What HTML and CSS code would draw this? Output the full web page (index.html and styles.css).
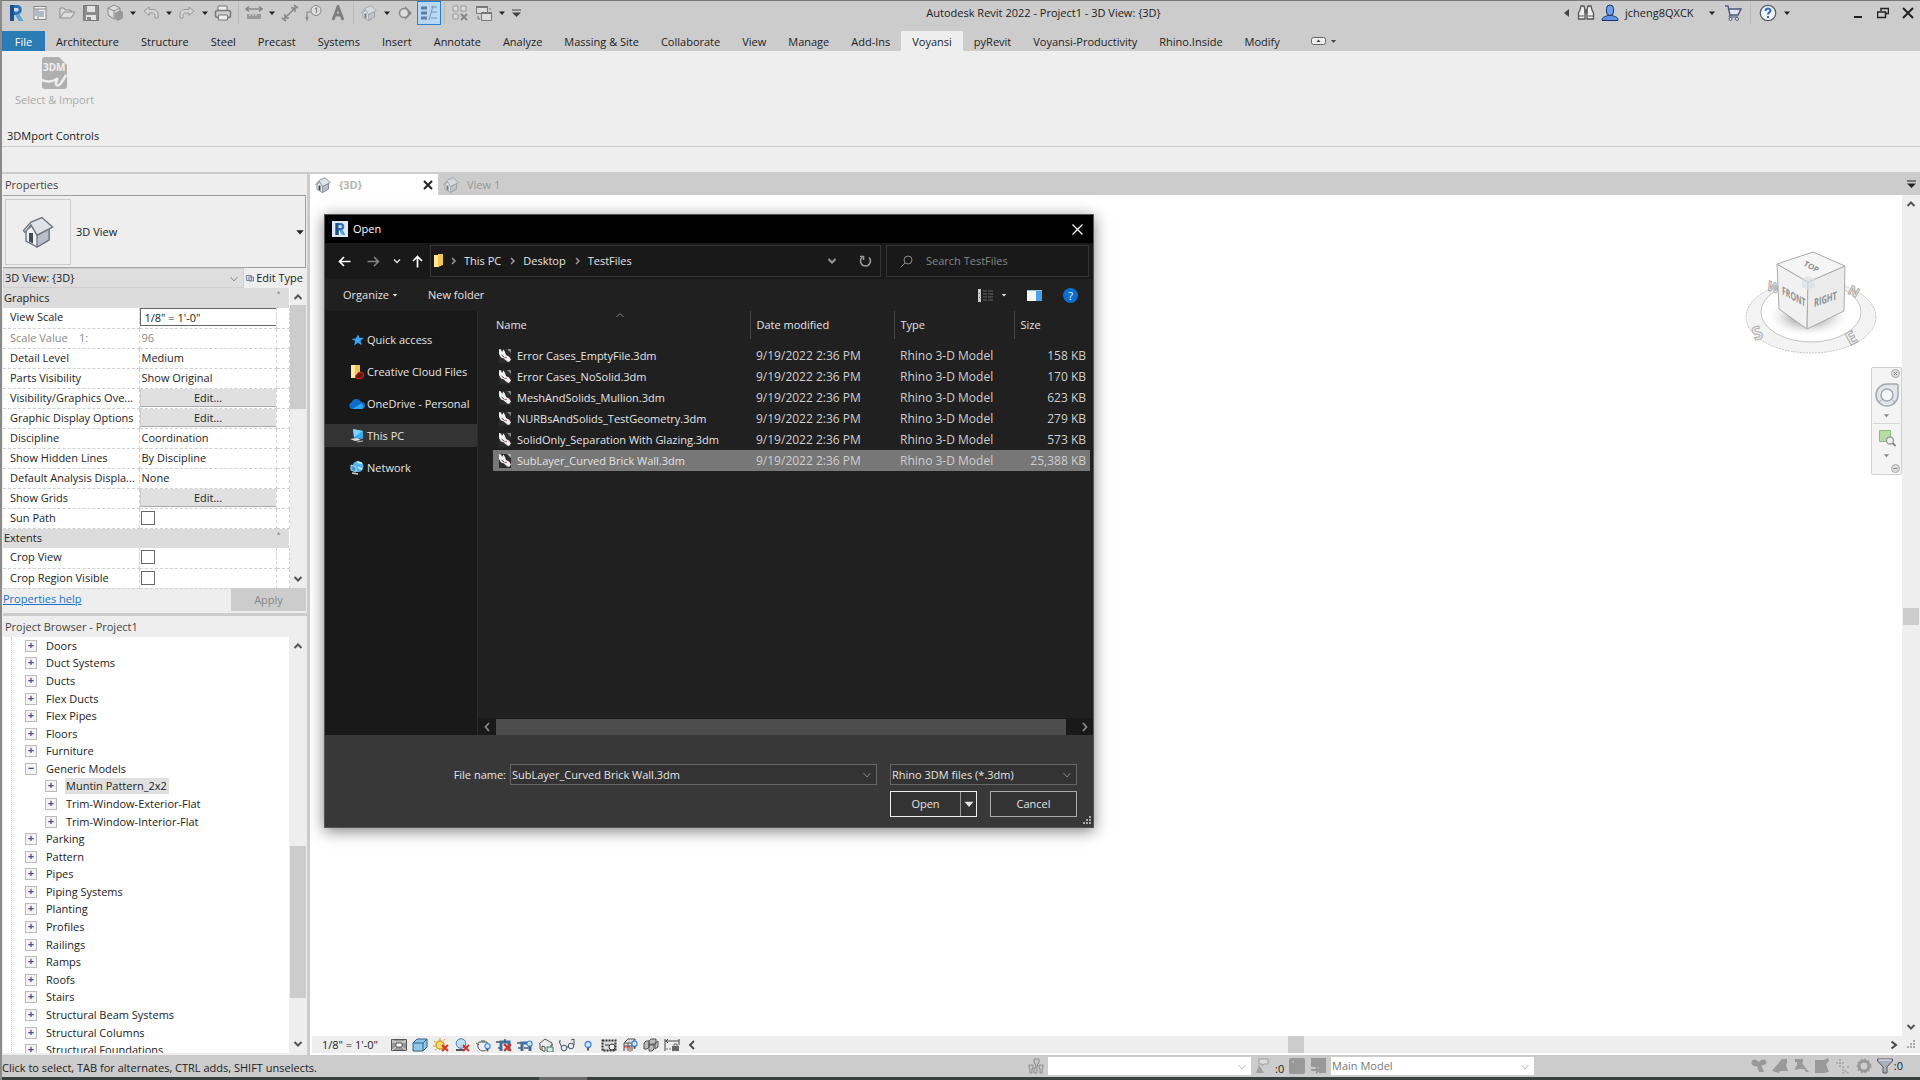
FILE: index.html
```
<!DOCTYPE html>
<html lang="en">
<head>
    <meta charset="UTF-8">
    <meta name="viewport" content="width=device-width, initial-scale=1.0">
    <title>Autodesk Revit 2022 - Project1 - 3D View: {3D}</title>
    <link rel="stylesheet" href="styles.css">
</head>
<body>
    <!-- shared icons -->
    <svg class="defs" aria-hidden="true">
        <symbol id="i-house" viewBox="0 0 16 16">
            <path d="M2 7 L2 12.500 L7.500 15.500 L13.500 12 L13.500 6.500 L8 3Z" fill="#eceef1" stroke="#6c747e" stroke-width=".7"/>
            <path d="M7.500 9.500 L13.500 6.500 V12 L7.500 15.500Z" fill="#b9bfc8" stroke="#6c747e" stroke-width=".6"/>
            <path d="M.7 7.300 L4.500 3 L10 .8 L15.300 5.500 L7.500 9.600 L4.500 4.500 L1.500 8.200Z" fill="#dfe3e8" stroke="#6c747e" stroke-width=".7"/>
            <path d="M3.500 8.500 h2 v5.200 l-2 -1z" fill="#444b55"/>
        </symbol>
        <symbol id="i-down" viewBox="0 0 8 8"><path d="M1 2.500h6L4 6z" fill="currentColor"/></symbol>
        <symbol id="i-chev" viewBox="0 0 10 10"><path d="M1.500 3l3.500 4 3.500-4" fill="none" stroke="currentColor"/></symbol>
        <symbol id="i-bold-chev" viewBox="0 0 10 10"><path d="M1.500 3l3.500 3.500L8.500 3" fill="none" stroke="currentColor" stroke-width="2"/></symbol>
        <symbol id="i-rhino" viewBox="0 0 14 16">
            <path d="M1 1h8l4 4v10H1z" fill="#2b2b2b"/>
            <path d="M9 1l4 4V1z" fill="#e8e8e8" opacity=".5"/>
            <path d="M1 1l2 .5 1 2.500 1.500-2.500L7 4l1 3 3 1.500 2 3-2 2.500-3-1-2-2.500-3-1L1 6z" fill="#f1f1f1"/>
            <path d="M3.500 7l3 2.500M7 12l2 1.500" stroke="#444"/>
            <circle cx="8" cy="9.500" r=".8" fill="#b43b3b"/>
        </symbol>
        <symbol id="i-r" viewBox="0 0 16 18">
            <path d="M2 1h7c6 0 6 8 2 9l4 7h-4L7.500 11H6v6H2z" fill="#2b73b8"/>
            <path d="M2 1h4v16H2z" fill="#1c4f8c"/>
            <path d="M6 4h3c2.200 0 2.200 3.500 0 3.500H6z" fill="#cfdcea"/>
            <path d="M11 10l4 7h-4L7.500 11z" fill="#59a7dd"/>
        </symbol>
        <symbol id="i-redx" viewBox="0 0 8 8"><path d="M1 1l6 6M7 1L1 7" stroke="#d0352b" stroke-width="2"/></symbol>
        <symbol id="i-bulb" viewBox="0 0 8 10"><circle cx="4" cy="4" r="3" fill="#cfe6ff" stroke="#3f86dc" stroke-width="1.300"/><path d="M3 7h2v3H3z" fill="#556"/></symbol>
    </svg>

    <header class="titlebar">
        <div class="quick">
            <button class="qbtn" aria-label="Revit"><svg width="16" height="20"><use href="#i-r"/></svg></button>
            <button class="qbtn" aria-label="Home"><svg width="16" height="16" viewBox="0 0 16 16"><rect x="2" y="1.500" width="12" height="13" fill="#eee" stroke="#888"/><path d="M2 4h12M6 4v10" stroke="#888"/><path d="M3 6h2M3 8h2M3 10h2M7 7h5M7 9h5M7 11h5" stroke="#6787a8"/></svg></button>
            <button class="qbtn open" aria-label="Open"><svg width="18" height="16" viewBox="0 0 18 16"><path d="M2 13V3h4l1 2h6v2M2 13L6 7h11l-4 6z" fill="#ddd" stroke="#8d8d8d"/></svg></button>
            <button class="qbtn" aria-label="Save"><svg width="18" height="18" viewBox="0 0 18 18"><path d="M1.500 1.500h15v15h-15z" fill="#8c8c8c" stroke="#777"/><path d="M5 2h8v6H5zM4 11h10v5H4z" fill="#e2e2e2"/><path d="M5 13h4v3H5z" fill="#888"/></svg></button>
            <button class="qbtn" aria-label="Sync"><svg width="18" height="18" viewBox="0 0 18 18"><path d="M8 1l6 3v7l-6 4-6-4V4z" fill="#ddd" stroke="#888"/><path d="M2 4l6 3 6-3M8 7v8" stroke="#888" fill="none"/><path d="M9 9l5-3 3 2v6l-5 3-3-2z" fill="#999"/></svg></button>
            <button class="drop" aria-label="Sync options"><svg width="8" height="8"><use href="#i-down"/></svg></button>
            <button class="qbtn" aria-label="Undo"><svg width="16" height="16" viewBox="0 0 16 16"><path d="M1 6l5-4v2.500h4c4 0 5 3 5 5.500v3h-3v-2c0-2-1-3-3-3H6V10.500z" fill="#d5d5d5" stroke="#999"/></svg></button>
            <button class="drop" aria-label="Undo list"><svg width="8" height="8"><use href="#i-down"/></svg></button>
            <button class="qbtn" aria-label="Redo"><svg width="16" height="16" viewBox="0 0 16 16"><path d="M15 6l-5-4v2.500H6c-4 0-5 3-5 5.500v3h3v-2c0-2 1-3 3-3h3v2.500z" fill="#d5d5d5" stroke="#999"/></svg></button>
            <button class="drop" aria-label="Redo list"><svg width="8" height="8"><use href="#i-down"/></svg></button>
            <button class="qbtn" aria-label="Print"><svg width="18" height="18" viewBox="0 0 18 18"><path d="M4 6V2h9v4" fill="#eee" stroke="#777"/><rect x="1.500" y="6.500" width="15" height="7" rx="2" fill="#ccc" stroke="#777" stroke-width="1.500"/><path d="M4.500 11h9v5h-9z" fill="#eee" stroke="#777"/></svg></button>
            <span class="vsep"></span>
            <button class="qbtn" aria-label="Measure"><svg width="18" height="14" viewBox="0 0 18 14"><path d="M1 3h16M4 .5L1 3l3 2.500M14 .5L17 3l-3 2.500" fill="none" stroke="#888" stroke-width="1.500"/><path d="M2 8h14v5H2z" fill="#999"/><path d="M5 8v2M8 8v2M11 8v2" stroke="#ddd"/></svg></button>
            <button class="drop" aria-label="Measure options"><svg width="8" height="8"><use href="#i-down"/></svg></button>
            <button class="qbtn" aria-label="Aligned dimension"><svg width="18" height="18" viewBox="0 0 18 18"><path d="M4 14L14 4M4 10v4h4M10 4h4v4M1 14l4 3M13 1l4 3" fill="none" stroke="#888" stroke-width="1.600"/></svg></button>
            <button class="qbtn" aria-label="Tag by category"><svg width="18" height="18" viewBox="0 0 18 18"><circle cx="11" cy="6.500" r="5" fill="#ddd" stroke="#888"/><path d="M6 8H2v7M1 13l1 3 1-3M10 5l1.500-1v5" fill="none" stroke="#888" stroke-width="1.200"/></svg></button>
            <button class="qbtn" aria-label="Text"><svg width="16" height="16" viewBox="0 0 16 16"><path d="M3 15L8 1.500 13 15M5 10h6" fill="none" stroke="#7e7e7e" stroke-width="2.800"/></svg></button>
            <span class="vsep"></span>
            <button class="qbtn gray" aria-label="Default 3D view"><svg width="16" height="16"><use href="#i-house"/></svg></button>
            <button class="drop" aria-label="3D view options"><svg width="8" height="8"><use href="#i-down"/></svg></button>
            <button class="qbtn" aria-label="Section"><svg width="16" height="16" viewBox="0 0 16 16"><path d="M8 1l7 7-7 7z" fill="#888"/><circle cx="7" cy="8" r="4.500" fill="#ddd" stroke="#888" stroke-width="1.500"/></svg></button>
            <button class="qbtn on" aria-label="Thin lines"><svg width="16" height="16" viewBox="0 0 16 16"><path d="M0 3h6M0 8h6M0 13h6" stroke="#5d7fa6" stroke-width="3"/><path d="M10 2h6M10 7h6M10 13h6M8 15L12 1" stroke="#7896b8"/></svg></button>
            <span class="vsep"></span>
            <button class="qbtn" aria-label="Close inactive views"><svg width="16" height="16" viewBox="0 0 16 16"><path d="M1 1h5v5H1zM9 1h5v5H9zM1 9h5v5H1z" fill="#ddd" stroke="#999"/><path d="M9 9l6 6M15 9l-6 6" stroke="#888" stroke-width="2"/></svg></button>
            <button class="qbtn" aria-label="Switch windows"><svg width="18" height="18" viewBox="0 0 18 18"><path d="M1.500 2.500h11v7h-11zM6.500 8.500h10v8h-10z" fill="#ddd" stroke="#777"/><path d="M1 3h12M6 9h11" stroke="#777" stroke-width="2"/><path d="M3 12v3h2M15 6V4" stroke="#777" fill="none"/></svg></button>
            <button class="drop" aria-label="Window list"><svg width="8" height="8"><use href="#i-down"/></svg></button>
            <button class="more" aria-label="Customize"><svg width="9" height="9" viewBox="0 0 9 9"><path d="M0 1h9" stroke="#444"/><path d="M0 3.500h9L4.500 8z" fill="#444"/></svg></button>
        </div>
        <h1 class="apptitle">Autodesk Revit 2022 - Project1 - 3D View: {3D}</h1>
        <div class="account">
            <svg width="8" height="8" viewBox="0 0 8 8"><path d="M6 0v8L1 4z" fill="#444"/></svg>
            <svg width="18" height="18" viewBox="0 0 18 18"><path d="M3 6l1-4h3l1 4v9H1.500V9zM15 6l-1-4h-3l-1 4v9h6.500V9z" fill="#eee" stroke="#555" stroke-width="1.300"/><path d="M8 6h2v3H8zM2 12h5M11 12h5" stroke="#555" fill="#777"/></svg>
            <svg width="18" height="18" viewBox="0 0 18 18"><path d="M1 16.500c0-4 3-3.500 5.500-5h5c2.500 1.500 5.500 1 5.500 5z" fill="#5f93e6" stroke="#1e335f"/><rect x="5.500" y="1" width="7" height="10.500" rx="3.500" fill="#6d9ff0" stroke="#1e335f"/></svg>
            <span class="user">jcheng8QXCK</span>
            <svg width="8" height="8"><use href="#i-down"/></svg>
            <svg class="cart" width="18" height="18" viewBox="0 0 18 18"><path d="M1 2h3l2 9h8l3-6H5" fill="#dfe3ef" stroke="#4b567c" stroke-width="1.400"/><path d="M6 11l-1 2h9" fill="none" stroke="#4b567c"/><circle cx="6.500" cy="15" r="1.500" fill="#fff" stroke="#4b567c"/><circle cx="13" cy="15" r="1.500" fill="#fff" stroke="#4b567c"/></svg>
            <span class="vsep"></span>
            <svg width="18" height="18" viewBox="0 0 18 18"><circle cx="9" cy="9" r="7.700" fill="#f4f6fa" stroke="#59616c" stroke-width="1.300"/><path d="M6.500 7c0-3.500 5-3.200 5-.5 0 2-2.500 1.800-2.500 4M9 12v2" fill="none" stroke="#2f66c8" stroke-width="2"/></svg>
            <svg width="8" height="8"><use href="#i-down"/></svg>
        </div>
        <div class="winbtns">
            <button aria-label="Minimize"><svg width="12" height="12" viewBox="0 0 12 12"><path d="M2 10h8" stroke="#222" stroke-width="2"/></svg></button>
            <button aria-label="Restore"><svg width="12" height="12" viewBox="0 0 12 12"><path d="M4 4V1.500h7.500v5H9M.5 5h8v5.500h-8z" fill="none" stroke="#222" stroke-width="1.500"/></svg></button>
            <button aria-label="Close"><svg width="12" height="12" viewBox="0 0 12 12"><path d="M1 1l10 10M11 1L1 11" stroke="#222" stroke-width="2"/></svg></button>
        </div>
    </header>

    <nav class="tabs">
        <a class="file" href="#">File</a>
        <a href="#">Architecture</a>
        <a href="#">Structure</a>
        <a href="#">Steel</a>
        <a href="#">Precast</a>
        <a href="#">Systems</a>
        <a href="#">Insert</a>
        <a href="#">Annotate</a>
        <a href="#">Analyze</a>
        <a href="#">Massing &amp; Site</a>
        <a href="#">Collaborate</a>
        <a href="#">View</a>
        <a href="#">Manage</a>
        <a href="#">Add-Ins</a>
        <a class="active" href="#">Voyansi</a>
        <a href="#">pyRevit</a>
        <a href="#">Voyansi-Productivity</a>
        <a href="#">Rhino.Inside</a>
        <a href="#">Modify</a>
        <button class="panelmode" aria-label="Ribbon display"><svg width="26" height="9" viewBox="0 0 26 9"><rect x=".5" y=".5" width="14" height="7" rx="2" fill="#eee" stroke="#666"/><path d="M5.500 5h4L7.500 2.500z" fill="#444"/><path d="M20 3h5l-2.500 3z" fill="#444"/></svg></button>
    </nav>

    <section class="ribbon">
        <button class="import" disabled>
            <svg width="28" height="34" viewBox="0 0 28 34"><path d="M4 1h14l8 8v21a3 3 0 0 1-3 3H4a3 3 0 0 1-3-3V4a3 3 0 0 1 3-3z" fill="#b0b0b0"/><text x="2" y="15" class="t3dm">3DM</text><path d="M0 24c5 2 10 2 14 0 1-1 3-2 2 0-3 6 1 7 4 3s4-6 5-8" fill="none" stroke="#eee" stroke-width="2.500"/></svg>
            <span>Select &amp; Import</span>
        </button>
        <p class="group-name">3DMport Controls</p>
    </section>
    <div class="optionsbar"></div>

    <main class="work">
        <aside class="left">
            <section class="props">
                <h2>Properties</h2>
                <div class="typebox">
                    <div class="thumb"><svg width="32" height="32"><use href="#i-house"/></svg></div>
                    <span>3D View</span>
                    <svg class="arrow" width="10" height="10"><use href="#i-down"/></svg>
                </div>
                <div class="instance">
                    <div class="pick">
                        <select aria-label="Instance"><option>3D View: {3D}</option></select>
                        <svg width="10" height="10"><use href="#i-chev"/></svg>
                    </div>
                    <button class="edittype"><svg width="8" height="8" viewBox="0 0 8 8"><path d="M.5 1.500h5v5h-5zM3 3h4.500v4H3z" fill="#dde" stroke="#7a8794"/></svg>Edit Type</button>
                </div>
                <div class="gridwrap">
                    <table class="params">
                        <colgroup><col class="c1"><col class="c2"><col class="c3"></colgroup>
                        <tr class="group"><th colspan="2">Graphics</th><td class="tick">˄</td></tr>
                        <tr><th><label for="scale">View Scale</label></th><td><input type="text" id="scale" value="1/8&quot; = 1'-0&quot;"></td><td></td></tr>
                        <tr class="off"><th>Scale Value &nbsp;&nbsp; 1:</th><td>96</td><td></td></tr>
                        <tr><th>Detail Level</th><td>Medium</td><td></td></tr>
                        <tr><th>Parts Visibility</th><td>Show Original</td><td></td></tr>
                        <tr><th>Visibility/Graphics Ove...</th><td><button>Edit...</button></td><td></td></tr>
                        <tr><th>Graphic Display Options</th><td><button>Edit...</button></td><td></td></tr>
                        <tr><th>Discipline</th><td>Coordination</td><td></td></tr>
                        <tr><th>Show Hidden Lines</th><td>By Discipline</td><td></td></tr>
                        <tr><th>Default Analysis Displa...</th><td>None</td><td></td></tr>
                        <tr><th>Show Grids</th><td><button>Edit...</button></td><td></td></tr>
                        <tr><th><label for="sun">Sun Path</label></th><td><input type="checkbox" id="sun"></td><td></td></tr>
                        <tr class="group"><th colspan="2">Extents</th><td class="tick">˄</td></tr>
                        <tr><th><label for="crop">Crop View</label></th><td><input type="checkbox" id="crop"></td><td></td></tr>
                        <tr><th><label for="region">Crop Region Visible</label></th><td><input type="checkbox" id="region"></td><td></td></tr>
                    </table>
                    <div class="vbar props-bar">
                        <svg class="up" width="10" height="10"><use href="#i-bold-chev"/></svg>
                        <i></i>
                        <svg width="10" height="10"><use href="#i-bold-chev"/></svg>
                    </div>
                </div>
                <div class="applyrow">
                    <a href="#">Properties help</a>
                    <button disabled>Apply</button>
                </div>
            </section>
            <section class="browser">
                <h2>Project Browser - Project1</h2>
                <div class="treewrap">
                    <ul class="tree">
                        <li>Doors</li>
                        <li>Duct Systems</li>
                        <li>Ducts</li>
                        <li>Flex Ducts</li>
                        <li>Flex Pipes</li>
                        <li>Floors</li>
                        <li>Furniture</li>
                        <li class="opened">Generic Models</li>
                        <li class="child"><span>Muntin Pattern_2x2</span></li>
                        <li class="child">Trim-Window-Exterior-Flat</li>
                        <li class="child">Trim-Window-Interior-Flat</li>
                        <li>Parking</li>
                        <li>Pattern</li>
                        <li>Pipes</li>
                        <li>Piping Systems</li>
                        <li>Planting</li>
                        <li>Profiles</li>
                        <li>Railings</li>
                        <li>Ramps</li>
                        <li>Roofs</li>
                        <li>Stairs</li>
                        <li>Structural Beam Systems</li>
                        <li>Structural Columns</li>
                        <li>Structural Foundations</li>
                    </ul>
                    <div class="vbar tree-bar">
                        <svg class="up" width="10" height="10"><use href="#i-bold-chev"/></svg>
                        <i></i>
                        <svg width="10" height="10"><use href="#i-bold-chev"/></svg>
                    </div>
                </div>
            </section>
        </aside>

        <section class="views">
            <div class="viewtabs">
                <div class="vtab current">
                    <svg width="16" height="16"><use href="#i-house"/></svg>
                    <span>{3D}</span>
                    <button aria-label="Close view"><svg width="10" height="10" viewBox="0 0 10 10"><path d="M1 1l8 8M9 1L1 9" stroke="#222" stroke-width="2"/></svg></button>
                </div>
                <div class="vtab">
                    <svg width="16" height="16"><use href="#i-house"/></svg>
                    <span>View 1</span>
                </div>
                <button class="more" aria-label="Tab list"><svg width="9" height="9" viewBox="0 0 9 9"><path d="M0 1h9" stroke="#222"/><path d="M0 3.500h9L4.500 8z" fill="#222"/></svg></button>
            </div>
            <div class="stage">
                <div class="canvas">
                    <svg class="cube" width="136" height="110" viewBox="0 0 136 110">
                        <defs><radialGradient id="shade"><stop offset=".3" stop-color="#aaa"/><stop offset="1" stop-color="#fff" stop-opacity="0"/></radialGradient></defs>
                        <ellipse cx="67" cy="67" rx="65" ry="36" fill="#f3f3f3" stroke="#c3c3c3" stroke-dasharray="2 1"/>
                        <ellipse cx="67" cy="62" rx="50" ry="30" fill="#fff" stroke="#c3c3c3"/>
                        <ellipse cx="64" cy="67" rx="42" ry="20" fill="url(#shade)"/>
                        <text class="compass" x="8" y="89" transform="rotate(-20 14 82)">S</text>
                        <text class="compass" x="102" y="95" transform="rotate(-28 106 88)">E</text>
                        <text class="compass far" x="105" y="45" transform="rotate(28 108 40)">N</text>
                        <text class="compass far" x="24" y="42" transform="rotate(20 30 36)">W</text>
                        <path d="M33 14l31 18-1 47-28-20z" fill="#f1f1f1" stroke="#ababab"/>
                        <path d="M64 32l37-16-1 45-37 18z" fill="#ececec" stroke="#ababab"/>
                        <path d="M33 14l36-12 32 14-37 16z" fill="#f5f5f5" stroke="#ababab"/>
                        <path d="M58 29l6-3 7 3v8l-7 3-6-3z" fill="#dbe0e5" opacity=".7"/>
                        <text class="face" transform="matrix(.87 .48 0 1.400 38 44)">FRONT</text>
                        <text class="face" transform="matrix(.94 -.32 0 1.400 70 57)">RIGHT</text>
                        <text class="face" transform="matrix(.87 .48 -.5 .8 59 15)">TOP</text>
                    </svg>
                    <div class="navbar">
                        <button class="dot" aria-label="Close navigation bar"><svg width="9" height="9" viewBox="0 0 9 9"><circle cx="4.500" cy="4.500" r="4" fill="#ddd" stroke="#aaa"/><path d="M3 3l3 3M6 3L3 6" stroke="#888"/></svg></button>
                        <button aria-label="Steering wheel"><svg width="24" height="24" viewBox="0 0 24 24"><path d="M12 1h9a2 2 0 0 1 2 2v9A11 11 0 1 1 12 1z" fill="#e3e5e9" stroke="#a3a8b2" stroke-width="1.500"/><circle cx="12" cy="12" r="6" fill="#f5f6f8" stroke="#a3a8b2" stroke-width="1.500"/><path d="M4 19l4-3M20 19l-4-3" stroke="#a3a8b2"/></svg></button>
                        <svg width="7" height="7"><use href="#i-down"/></svg>
                        <hr>
                        <button aria-label="Zoom region"><svg width="18" height="18" viewBox="0 0 18 18"><path d="M1.500 1.500h11v11h-11z" fill="#b9dba5" stroke="#8fb97a"/><circle cx="12" cy="11.500" r="3.500" fill="#eee" stroke="#999" stroke-width="1.300"/><path d="M14.500 14l3 3" stroke="#888" stroke-width="2"/></svg></button>
                        <svg width="7" height="7"><use href="#i-down"/></svg>
                        <button class="dot" aria-label="Navigation bar options"><svg width="9" height="9" viewBox="0 0 9 9"><circle cx="4.500" cy="4.500" r="4" fill="#ddd" stroke="#aaa"/><path d="M2.500 4.500h4" stroke="#888"/></svg></button>
                    </div>
                </div>
                <div class="vbar stage-bar">
                    <svg class="up" width="10" height="10"><use href="#i-bold-chev"/></svg>
                    <i></i>
                    <svg width="10" height="10"><use href="#i-bold-chev"/></svg>
                </div>
            </div>
            <div class="viewctl">
                <span class="vscale">1/8" = 1'-0"</span>
                <button aria-label="Detail level"><svg width="16" height="14" viewBox="0 0 16 14"><path d="M.5 1.500h15v11H.5z" fill="#999" stroke="#555"/><path d="M1 2l14 10M15 2L1 12M1 4h14" stroke="#ddd"/><path d="M5 5h6v4H5z" fill="#fff" stroke="#555"/></svg></button>
                <button aria-label="Visual style"><svg width="16" height="14" viewBox="0 0 16 14"><path d="M1 5l4-4h10v8l-4 4H1z" fill="#8fc8ea" stroke="#35617f"/><path d="M1 5h10l4-4M11 5v8" stroke="#35617f" fill="none"/></svg></button>
                <button aria-label="Sun path off"><svg width="16" height="14" viewBox="0 0 16 14"><circle cx="7" cy="7" r="4" fill="#f9dd6c" stroke="#d79a26" stroke-width="1.500"/><path d="M7 0v2M1 3l1.500 1M0 8h2M12 1l-1 1.500M2 12l1.500-1" stroke="#d79a26"/><use href="#i-redx" x="8" y="6" width="8" height="8"/></svg></button>
                <button aria-label="Shadows off"><svg width="16" height="14" viewBox="0 0 16 14"><path d="M2 12h9" stroke="#555" stroke-width="2"/><circle cx="7" cy="5.500" r="4.800" fill="#bfdcf2" stroke="#4181b5"/><use href="#i-redx" x="8" y="6" width="8" height="8"/></svg></button>
                <button aria-label="Rendering dialog"><svg width="16" height="14" viewBox="0 0 16 14"><path d="M4 4c-3 4 0 9 4 9s6-4 4-9zM6 3h4M1 5l3 2" fill="#eee" stroke="#555"/><use href="#i-bulb" x="9" y="4" width="7" height="10"/></svg></button>
                <button aria-label="Crop view off"><svg width="16" height="14" viewBox="0 0 16 14"><path d="M5 13V4h8v9" fill="none" stroke="#3873ac" stroke-width="3"/><path d="M0 4h4M2 10h3M9 1v3" stroke="#555" stroke-width="1.500"/><use href="#i-redx" x="7" y="5" width="9" height="9"/></svg></button>
                <button aria-label="Crop region hidden"><svg width="16" height="14" viewBox="0 0 16 14"><path d="M5 13V5h8v8" fill="none" stroke="#3873ac" stroke-width="3"/><path d="M0 5h4M1 10h3M7 10h4" stroke="#555" stroke-width="1.500"/><use href="#i-bulb" x="9" y="1" width="7" height="11"/></svg></button>
                <button aria-label="Unlocked 3D view"><svg width="16" height="14" viewBox="0 0 16 14"><path d="M1 6l6-5 7 4v3M2 6v5l5 3M4 12V8l3 1v4" fill="#eee" stroke="#555"/><path d="M9 9h6v5H9z" fill="#d8ebe0" stroke="#3c7561"/><path d="M13 9V7h2" stroke="#3c7561" fill="none"/></svg></button>
                <button aria-label="Temporary hide"><svg width="16" height="14" viewBox="0 0 16 14"><circle cx="5" cy="10" r="2.800" fill="#e6eef2" stroke="#456"/><circle cx="12" cy="8" r="2.800" fill="#e6eef2" stroke="#456"/><path d="M7.500 9h2M2.500 9L0 3h2M15 7V1l-3 1" fill="none" stroke="#456"/></svg></button>
                <button aria-label="Reveal hidden"><svg width="16" height="14" viewBox="0 0 16 14"><use href="#i-bulb" x="4" y="2" width="8" height="11"/></svg></button>
                <button aria-label="Temporary view properties"><svg width="16" height="14" viewBox="0 0 16 14"><path d="M1.500 2.500h13v10h-13z" fill="#ddd" stroke="#333" stroke-width="2" stroke-dasharray="2 1"/><circle cx="11" cy="9" r="3" fill="#eee" stroke="#333"/><path d="M4 7h4" stroke="#333"/></svg></button>
                <button aria-label="Analytical model"><svg width="16" height="14" viewBox="0 0 16 14"><path d="M2 13V5l4-4h7v9M2 5h8v8M10 5l3-4M6 5v8M2 8h8" fill="#ddd" stroke="#555"/><path d="M2 9h6v5" fill="none" stroke="#c9453c"/><use href="#i-bulb" x="9" y="1" width="7" height="11"/></svg></button>
                <button aria-label="Displacement sets"><svg width="16" height="14" viewBox="0 0 16 14"><path d="M1 5l2-2h3v6l-2 2H1zM6 3l2-2h5v4l-2 2H6zM6 7l2-1h3v5l-2 2H6zM12 5l3-2v6l-3 2z" fill="#bbb" stroke="#555"/></svg></button>
                <button aria-label="Reveal constraints"><svg width="16" height="14" viewBox="0 0 16 14"><path d="M1 1v12M15 1v6M1 3h14M4 1L2 3l2 2" fill="none" stroke="#444"/><path d="M2 11h5" stroke="#777" stroke-dasharray="2 1"/><path d="M8 8h7v5H8z" fill="#666"/><path d="M10 8V6h3v2" fill="none" stroke="#666"/></svg></button>
                <svg class="back" width="8" height="10" viewBox="0 0 8 10"><path d="M6 1L2 5l4 4" fill="none" stroke="#444" stroke-width="1.800"/></svg>
                <div class="hbar"><i></i><svg width="8" height="10" viewBox="0 0 8 10"><path d="M1.500 1.500L6 5 1.500 8.500" fill="none" stroke="#444" stroke-width="2"/></svg></div>
                <svg class="grip" width="10" height="10" viewBox="0 0 10 10"><path d="M7 1h2M4 4h2M7 4h2M1 7h2M4 7h2M7 7h2" stroke="#aaa" stroke-width="2"/></svg>
            </div>
        </section>

        <section class="dialog" role="dialog" aria-label="Open">
            <div class="dtitle">
                <span class="logo"><svg width="12" height="14"><use href="#i-r"/></svg></span>
                <h2>Open</h2>
                <button aria-label="Close dialog"><svg width="11" height="11" viewBox="0 0 11 11"><path d="M.5 .5l10 10M10.500 .5l-10 10" stroke="#fff" stroke-width="1.200"/></svg></button>
            </div>
            <div class="dnav">
                <button class="back" aria-label="Back"><svg width="13" height="11" viewBox="0 0 13 11"><path d="M12.500 5.500H1.500M6 1L1.500 5.500 6 10" fill="none" stroke="#fff" stroke-width="1.700"/></svg></button>
                <button class="forward" aria-label="Forward"><svg width="13" height="11" viewBox="0 0 13 11"><path d="M.5 5.500h11M7 1l4.500 4.500L7 10" fill="none" stroke="#858585" stroke-width="1.500"/></svg></button>
                <button aria-label="Recent"><svg width="8" height="8" viewBox="0 0 8 8"><path d="M1 2.500l3 3 3-3" fill="none" stroke="#ddd" stroke-width="1.500"/></svg></button>
                <button aria-label="Up"><svg width="11" height="13" viewBox="0 0 11 13"><path d="M5.500 12.500V1.500M1 6l4.500-4.500L10 6" fill="none" stroke="#fff" stroke-width="1.700"/></svg></button>
                <div class="path">
                    <svg width="11" height="14" viewBox="0 0 11 14"><path d="M1 1h5v12H1z" fill="#ffe9a3"/><path d="M5 0h5v11l-5 2z" fill="#f4c551"/></svg>
                    <svg width="6" height="8" viewBox="0 0 6 8"><path d="M1 1l3 3-3 3" fill="none" stroke="#999" stroke-width="1.500"/></svg>
                    <a href="#">This PC</a>
                    <svg width="6" height="8" viewBox="0 0 6 8"><path d="M1 1l3 3-3 3" fill="none" stroke="#999" stroke-width="1.500"/></svg>
                    <a href="#">Desktop</a>
                    <svg width="6" height="8" viewBox="0 0 6 8"><path d="M1 1l3 3-3 3" fill="none" stroke="#999" stroke-width="1.500"/></svg>
                    <a href="#">TestFiles</a>
                    <span class="tools">
                        <svg width="10" height="10"><use href="#i-bold-chev"/></svg>
                        <svg width="13" height="13" viewBox="0 0 13 13"><path d="M3 2.500a5 5 0 1 0 7 0M1 1.500h3.500v3.500" fill="none" stroke="#999" stroke-width="1.600"/></svg>
                    </span>
                </div>
                <div class="search">
                    <svg width="13" height="13" viewBox="0 0 13 13"><circle cx="8" cy="5" r="4" fill="none" stroke="#888"/><path d="M5 8L.5 12.500" stroke="#888"/></svg>
                    <input type="text" placeholder="Search TestFiles" aria-label="Search TestFiles">
                </div>
            </div>
            <div class="dtools">
                <button class="organize">Organize <svg width="6" height="6"><use href="#i-down"/></svg></button>
                <button>New folder</button>
                <button class="viewas" aria-label="Change view"><svg width="15" height="13" viewBox="0 0 15 13"><path d="M0 0h3v13H0z" fill="#ccc"/><path d="M1 4h1v1H1zM1 8h1v1H1z" fill="#c44"/><path d="M5 2h4M5 5h4M5 8h4M5 11h4M10 2h5M10 5h5M10 8h5M10 11h5" stroke="#666"/></svg></button>
                <svg class="viewdrop" width="6" height="6"><use href="#i-down"/></svg>
                <button class="preview" aria-label="Preview pane"><svg width="15" height="11" viewBox="0 0 15 11"><path d="M0 0h15v11H0z" fill="#f5f5f5"/><path d="M9 0h6v11H9z" fill="#4aa3e6"/><path d="M0 0h15v1H0z" fill="#8cc2ea"/></svg></button>
                <button class="dhelp" aria-label="Help">?</button>
            </div>
            <div class="dbody">
                <ul class="places">
                    <li><svg width="16" height="16" viewBox="0 0 16 16"><path d="M9 2.500l1.500 3.500 4.500-.2-3.500 3 1.300 4.500-3.800-2.500L5 13.500l1.300-4.500L2.500 7l4.300-.5z" fill="#38a5f2"/></svg>Quick access</li>
                    <li><svg width="16" height="16" viewBox="0 0 16 16"><path d="M2 1h5v13H2z" fill="#ffe9a3"/><path d="M6 1h5v11l-5 2z" fill="#f4c551"/><path d="M7.500 14.500a2.200 2.200 0 0 1 .5-4 3.500 3.200 0 1 1 4 4z" fill="#6d1714" stroke="#d02b20"/></svg>Creative Cloud Files</li>
                    <li><svg width="16" height="16" viewBox="0 0 16 16"><path d="M3.500 13a3.500 3.500 0 0 1-.8-6.800A5 5 0 0 1 12 6a3.500 3.500 0 0 1 1 7z" fill="#0f6cc6"/><path d="M3.500 13L12 7.500a3 3 0 0 1 1 5.500z" fill="#2da5ec"/></svg>OneDrive - Personal</li>
                    <li class="here"><svg width="16" height="16" viewBox="0 0 16 16"><path d="M4 1l10 2v8L5 10z" fill="#37a9ee"/><path d="M4 1l10 2-9 6z" fill="#7fd0fa"/><path d="M1 11l5 2 6-1-4-2z" fill="#ddd"/><path d="M8 14l6-1" stroke="#bbb"/></svg>This PC</li>
                    <li><svg width="16" height="16" viewBox="0 0 16 16"><circle cx="9" cy="6.500" r="5.500" fill="#52b4ea"/><path d="M8 2c2 0 3 2 5 1M9 8c1-1 3 1 4 1" stroke="#d7f1fc" stroke-width="1.500" fill="none"/><path d="M2 5l5 2v5l-5-2z" fill="#3c97d4" stroke="#a4dcf5"/><path d="M3 13l6 1" stroke="#ccc" stroke-width="1.500"/></svg>Network</li>
                </ul>
                <div class="filepane">
                    <table class="files">
                        <colgroup><col class="f0"><col class="f1"><col class="f2"><col class="f3"><col class="f4"></colgroup>
                        <thead>
                            <tr><th></th><th class="sorted">Name<svg width="10" height="6" viewBox="0 0 10 6"><path d="M1.500 5L5 1.500 8.500 5" fill="none" stroke="#888"/></svg></th><th>Date modified</th><th>Type</th><th>Size</th></tr>
                        </thead>
                        <tbody>
                            <tr><td class="pad"></td><td class="name"><svg width="14" height="16"><use href="#i-rhino"/></svg>Error Cases_EmptyFile.3dm</td><td>9/19/2022 2:36 PM</td><td>Rhino 3-D Model</td><td>158 KB</td></tr>
                            <tr><td class="pad"></td><td class="name"><svg width="14" height="16"><use href="#i-rhino"/></svg>Error Cases_NoSolid.3dm</td><td>9/19/2022 2:36 PM</td><td>Rhino 3-D Model</td><td>170 KB</td></tr>
                            <tr><td class="pad"></td><td class="name"><svg width="14" height="16"><use href="#i-rhino"/></svg>MeshAndSolids_Mullion.3dm</td><td>9/19/2022 2:36 PM</td><td>Rhino 3-D Model</td><td>623 KB</td></tr>
                            <tr><td class="pad"></td><td class="name"><svg width="14" height="16"><use href="#i-rhino"/></svg>NURBsAndSolids_TestGeometry.3dm</td><td>9/19/2022 2:36 PM</td><td>Rhino 3-D Model</td><td>279 KB</td></tr>
                            <tr><td class="pad"></td><td class="name"><svg width="14" height="16"><use href="#i-rhino"/></svg>SolidOnly_Separation With Glazing.3dm</td><td>9/19/2022 2:36 PM</td><td>Rhino 3-D Model</td><td>573 KB</td></tr>
                            <tr class="selected"><td class="pad"></td><td class="name"><svg width="14" height="16"><use href="#i-rhino"/></svg>SubLayer_Curved Brick Wall.3dm</td><td>9/19/2022 2:36 PM</td><td>Rhino 3-D Model</td><td>25,388 KB</td></tr>
                        </tbody>
                    </table>
                    <div class="dscroll">
                        <svg width="8" height="10" viewBox="0 0 8 10"><path d="M6 1L2.500 5 6 9" fill="none" stroke="#888" stroke-width="1.800"/></svg>
                        <i></i>
                        <svg width="8" height="10" viewBox="0 0 8 10"><path d="M2 1l3.500 4L2 9" fill="none" stroke="#888" stroke-width="1.800"/></svg>
                    </div>
                </div>
            </div>
            <div class="dfoot">
                <label for="fname">File name:</label>
                <div class="combo">
                    <input type="text" id="fname" value="SubLayer_Curved Brick Wall.3dm">
                    <svg width="10" height="10"><use href="#i-chev"/></svg>
                </div>
                <div class="combo">
                    <select aria-label="File type"><option>Rhino 3DM files (*.3dm)</option></select>
                    <svg width="10" height="10"><use href="#i-chev"/></svg>
                </div>
                <div class="actions">
                    <div class="split"><button>Open</button><button class="splitdrop" aria-label="Open options"><svg width="12" height="12"><use href="#i-down"/></svg></button></div>
                    <button class="cancel">Cancel</button>
                </div>
                <svg class="dgrip" width="10" height="10" viewBox="0 0 10 10"><path d="M7 1h2M4 4h2M7 4h2M1 7h2M4 7h2M7 7h2" stroke="#aaa" stroke-width="2"/></svg>
            </div>
        </section>
    </main>

    <footer class="status">
        <span class="msg">Click to select, TAB for alternates, CTRL adds, SHIFT unselects.</span>
        <svg class="worksets" width="16" height="16" viewBox="0 0 16 16"><path d="M6 1h5v4l-1.500 1v3h-2V6L6 5zM1 7h4v3l-1 1v4H2v-4l-1-1zM6 10h3v5H6zM11 7h4v3l-1 1v4h-2v-4l-1-1z" fill="#c4c4c4" stroke="#8e8e8e"/></svg>
        <div class="spick"><select aria-label="Active workset"><option></option></select><svg width="10" height="10"><use href="#i-chev"/></svg></div>
        <svg class="req" width="14" height="16" viewBox="0 0 14 16"><path d="M4 1h9v5H9L7 8V6H4z" fill="#ddd" stroke="#a0a0a0"/><path d="M1 15l3-8 2 3 3 5z" fill="#a0a0a0"/></svg>
        <span class="count">:0</span>
        <svg class="opt" width="16" height="16" viewBox="0 0 16 16"><rect width="16" height="16" rx="2" fill="#999"/><path d="M3 4h2" stroke="#ccc"/></svg>
        <svg class="opt" width="16" height="16" viewBox="0 0 16 16"><path d="M1 0h15v15H9V9H1z" fill="#999"/><path d="M1 12h7M6 9l3 3-3 3" fill="none" stroke="#999" stroke-width="2"/></svg>
        <div class="spick"><select aria-label="Design option"><option>Main Model</option></select><svg width="10" height="10"><use href="#i-chev"/></svg></div>
        <div class="toggles">
            <svg width="16" height="16" viewBox="0 0 16 16"><path d="M1 3c2-3 5-1 7 1 2-2 5-4 7-1s-3 5-5 4l3 7H8L6 8C3 9-1 6 1 3z" fill="#999"/></svg>
            <svg width="16" height="16" viewBox="0 0 16 16"><path d="M0 13L10 1h5v4l-1 2 2 6H8l-1 2z" fill="#999"/></svg>
            <svg width="16" height="16" viewBox="0 0 16 16"><path d="M2 1h8v3H9l2 4 5 6h-3l-2-3H6l-4 1 1-4h1V4H2z" fill="#999"/></svg>
            <svg width="16" height="16" viewBox="0 0 16 16"><path d="M1 2h9l4-2 1 3-3 3 3 8-5 1H1z" fill="#999"/></svg>
            <svg width="16" height="16" viewBox="0 0 16 16"><path d="M5 1v9M1 5h9M8 8v7l3-2 3 3M12 9h3" fill="none" stroke="#a5a5a5" stroke-width="1.500" stroke-dasharray="2 1"/></svg>
            <svg width="16" height="16" viewBox="0 0 16 16"><circle cx="8" cy="8" r="5" fill="none" stroke="#999" stroke-width="3"/><circle cx="8" cy="8" r="6.800" fill="none" stroke="#999" stroke-width="1.200" stroke-dasharray="2 2"/></svg>
            <svg width="16" height="16" viewBox="0 0 16 16"><path d="M.5 1h15v2L10 9v6H6V9L.5 3z" fill="#a9afb9" stroke="#565b64"/><path d="M2 2h12" stroke="#eef"/></svg>
            <span>:0</span>
        </div>
    </footer>
    <div class="taskbar"><i></i></div>
</body>
</html>
```
FILE: styles.css
```
* {
    box-sizing: border-box;
}

body {
    margin: 0;
    height: 100vh;
    display: flex;
    flex-direction: column;
    overflow: hidden;
    border-top: 1px solid #777;
    border-left: 2px solid #8a8a8a;
    background-color: #cccccc;
    color: #222;
    font-family: "Open Sans", "Noto Sans", sans-serif;
    font-size: 11px;
    line-height: 16px;
}

h1, h2, p, ul {
    margin: 0;
    padding: 0;
    font-size: 11px;
    font-weight: normal;
    list-style: none;
}

button, input, select {
    margin: 0;
    padding: 0;
    border: 0;
    border-radius: 0;
    background: none;
    color: inherit;
    font: inherit;
    appearance: none;
}

a {
    color: inherit;
    text-decoration: none;
}

svg {
    flex: none;
    display: block;
}

.defs {
    position: absolute;
    width: 0;
    height: 0;
}

/* title bar */
.titlebar {
    display: flex;
    align-items: center;
    height: 24px;
    flex: none;
}

.quick, .account, .winbtns {
    display: flex;
    align-items: center;
}

.quick {
    padding-left: 2px;
}

.qbtn, .drop, .more {
    display: flex;
    align-items: center;
    justify-content: center;
    width: 24px;
    height: 24px;
}

.drop {
    width: 12px;
}

.more {
    width: 16px;
}

.open {
    margin-left: 3px;
}

.gray {
    opacity: 0.6;
}

.on {
    background-color: #b9d7f0;
    border: 1px solid #2d7fd0;
}

.vsep {
    width: 1px;
    height: 22px;
    margin: 0 3px;
    background-color: #bbb;
}

.apptitle {
    flex: 1;
    text-align: center;
}

.account {
    gap: 6px;
    width: 228px;
}

.account .vsep {
    margin: 0 2px;
}

.user {
    flex: 1;
}

.cart {
    margin-left: 2px;
}

.winbtns {
    padding-left: 54px;
}

.winbtns button {
    display: flex;
    justify-content: center;
    width: 25px;
}

/* ribbon */
.tabs {
    display: flex;
    align-items: flex-end;
    height: 26px;
    flex: none;
}

.tabs a {
    height: 20px;
    padding: 0 11px;
    line-height: 21px;
    white-space: nowrap;
}

.tabs .file {
    width: 43px;
    padding: 0;
    text-align: center;
    background-color: #2b7bb5;
    color: #fff;
}

.tabs .active {
    background-color: #eeeeee;
}

.panelmode {
    height: 20px;
    padding: 0 20px;
}

.ribbon {
    height: 96px;
    flex: none;
    display: flex;
    flex-direction: column;
    justify-content: space-between;
    align-items: flex-start;
    padding: 5px 0 2px 5px;
    background-color: #eeeeee;
    border-bottom: 1px solid #ccc;
}

.import {
    display: flex;
    flex-direction: column;
    align-items: center;
    gap: 2px;
    padding: 0 8px;
    color: #aaa;
}

.t3dm {
    font-size: 10px;
    font-weight: bold;
    fill: #eee;
}

.optionsbar {
    height: 27px;
    flex: none;
    background-color: #eeeeee;
    border-bottom: 2px solid #ccc;
}

/* work area */
.work {
    position: relative;
    flex: 1;
    min-height: 0;
    display: grid;
    grid-template-columns: 308px 1fr;
}

.left {
    display: flex;
    flex-direction: column;
    min-height: 0;
    padding-left: 1px;
    border-right: 3px solid #ccc;
    background-color: #eeeeee;
}

.left h2 {
    height: 21px;
    padding-left: 2px;
    line-height: 21px;
    color: #444;
}

.typebox {
    display: flex;
    align-items: center;
    gap: 5px;
    height: 73px;
    margin-right: 1px;
    padding: 2px 0 2px 2px;
    border: 1px solid #a0a0a0;
    border-width: 1px 1px 1px 0;
}

.thumb {
    display: flex;
    align-items: center;
    justify-content: center;
    width: 66px;
    height: 66px;
    border: 1px solid #ccc;
}

.typebox .arrow {
    margin-left: auto;
}

.instance {
    display: flex;
    height: 20px;
}

.pick {
    position: relative;
    flex: 1;
    background-color: #dedede;
    border: 1px solid #d0d0d0;
}

.pick select {
    width: 100%;
    height: 18px;
    padding-left: 1px;
}

.pick svg, .combo svg, .spick svg {
    position: absolute;
    right: 4px;
    top: 5px;
    color: #888;
    pointer-events: none;
}

.edittype {
    display: flex;
    align-items: center;
    gap: 2px;
    padding: 0 4px 0 2px;
    white-space: nowrap;
}

.gridwrap {
    display: flex;
    height: 300px;
    background-color: #fff;
}

.params {
    flex: 1;
    width: 286px;
    table-layout: fixed;
    border-collapse: collapse;
}

.c1 {
    width: 136px;
}

.c2 {
    width: 137px;
}

.c3 {
    width: 13px;
}

.params tr {
    height: 20px;
}

.params th, .params td {
    height: 20px;
    padding: 0 0 1px 2px;
    font-weight: normal;
    text-align: left;
    line-height: 16px;
    white-space: nowrap;
    overflow: hidden;
    border: 1px dashed #d0d0d0;
    border-width: 0 1px 1px 0;
}

.params th {
    padding-left: 7px;
}

.params .group th, .params .group td {
    padding: 0 0 0 1px;
    border: 0;
    background-color: #dcdcdc;
}

.params .tick {
    vertical-align: top;
}

.off {
    color: #888;
}

.params input[type="text"], .params button {
    display: block;
    width: 137px;
    height: 18px;
    margin-left: -2px;
    border: 1px solid #666;
}

.params input[type="text"] {
    padding-left: 4px;
}

.params button {
    border-color: #e0e0e0 #aaa #aaa #ccc;
    background-color: #e0e0e0;
}

.params input[type="checkbox"] {
    display: block;
    width: 14px;
    height: 14px;
    margin-left: -1px;
    border: 1px solid #666;
    background-color: #fff;
}

/* scroll bars */
.vbar {
    display: flex;
    flex-direction: column;
    align-items: center;
    width: 18px;
    padding: 4px 0;
    background-color: #eeeeee;
    color: #555;
}

.vbar i {
    width: 16px;
    background-color: #cccccc;
}

.vbar .up {
    transform: scaleY(-1);
}

.vbar svg:last-child {
    margin-top: auto;
}

.props-bar i {
    height: 104px;
    margin-top: 3px;
}

.tree-bar i {
    height: 152px;
    margin-top: 195px;
}

.stage-bar i {
    height: 17px;
    margin-top: 399px;
}

.applyrow {
    display: flex;
    justify-content: space-between;
    height: 25px;
    line-height: 22px;
}

.applyrow a {
    color: #1a73c8;
    text-decoration: underline;
}

.applyrow button {
    width: 75px;
    height: 23px;
    margin-right: 1px;
    background-color: #cccccc;
    color: #888;
}

.browser {
    flex: 1;
    min-height: 0;
    display: flex;
    flex-direction: column;
    border-top: 3px solid #ccc;
}

.treewrap {
    flex: 1;
    min-height: 0;
    display: flex;
    overflow: hidden;
    margin-bottom: 2px;
    background-color: #fff;
}

.tree {
    flex: 1;
    display: flex;
    flex-direction: column;
    height: calc(100% + 6px);
    margin-left: 8px;
    border-left: 1px dotted #ccc;
}

.tree li {
    flex: 1;
    min-height: 17px;
    display: flex;
    align-items: center;
    padding-left: 13px;
}

.tree li::before {
    content: "+";
    width: 10px;
    height: 10px;
    margin-right: 9px;
    border: 1px solid #bbb;
    background-color: #f4f4f4;
    color: #3a559c;
    font-weight: bold;
    line-height: 8px;
    text-align: center;
}

.tree .opened::before {
    content: "−";
}

.tree .child {
    padding-left: 33px;
}

.tree span {
    padding: 0 2px 0 1px;
    margin-left: -1px;
    background-color: #e0e0e0;
}

/* view windows */
.views {
    display: flex;
    flex-direction: column;
    min-width: 0;
    min-height: 0;
    background-color: #fff;
}

.viewtabs {
    display: flex;
    height: 21px;
    flex: none;
    background-color: #cccccc;
}

.viewtabs .more {
    height: 21px;
    margin: 0 1px 0 auto;
}

.vtab {
    display: flex;
    align-items: center;
    gap: 8px;
    width: 128px;
    padding: 0 5px;
    color: #999;
}

.vtab svg {
    opacity: 0.6;
}

.current {
    background-color: #fff;
    color: #b5b5b5;
    font-weight: bold;
}

.current svg {
    opacity: 1;
}

.vtab button {
    margin-left: auto;
}

.stage {
    flex: 1;
    min-height: 0;
    display: flex;
}

.canvas {
    position: relative;
    flex: 1;
}

.cube {
    position: absolute;
    top: 55px;
    right: 22px;
}

.compass {
    font-size: 18px;
    font-weight: bold;
    fill: #eee;
    stroke: #b0b0b0;
}

.far {
    font-size: 13px;
}

.face {
    font-size: 8px;
    font-weight: bold;
    fill: #8e9195;
}

.navbar {
    position: absolute;
    top: 172px;
    right: 0;
    display: flex;
    flex-direction: column;
    align-items: center;
    justify-content: space-between;
    width: 31px;
    height: 108px;
    padding: 1px;
    border: 1px solid #d0d0d0;
    border-radius: 2px;
    background-color: #f4f4f4;
    color: #888;
}

.navbar .dot {
    align-self: flex-end;
    height: 9px;
}

.navbar hr {
    width: 100%;
    margin: 0;
    border: 0;
    border-top: 1px solid #d8d8d8;
}

.viewctl {
    display: flex;
    align-items: center;
    gap: 5px;
    height: 17px;
    flex: none;
    margin: 0 0 2px 2px;
    padding-left: 10px;
    background-color: #eeeeee;
}

.vscale {
    width: 64px;
}

.viewctl .back {
    margin-left: 3px;
}

.hbar {
    flex: 1;
    display: flex;
    align-items: center;
    height: 17px;
}

.hbar i {
    width: 16px;
    height: 17px;
    margin-left: 49%;
    background-color: #cccccc;
}

.hbar svg {
    margin-left: auto;
}

.grip {
    margin: 0 4px 0 3px;
}

/* open dialog */
.dialog {
    position: absolute;
    top: 40px;
    left: 322px;
    width: 770px;
    height: 614px;
    display: flex;
    flex-direction: column;
    border: 1px solid #555;
    background-color: #191919;
    box-shadow: 0 3px 14px rgba(0, 0, 0, 0.5);
    color: #e4e4e4;
}

.dtitle {
    display: flex;
    align-items: center;
    gap: 5px;
    height: 28px;
    flex: none;
    padding: 0 10px 0 7px;
    background-color: #000;
}

.dtitle h2 {
    flex: 1;
    color: #fff;
}

.logo {
    display: flex;
    justify-content: center;
    width: 16px;
    height: 16px;
    padding-top: 1px;
    background-color: #dfe8f3;
}

.dnav {
    display: flex;
    align-items: center;
    height: 36px;
    flex: none;
    padding: 0 4px 0 13px;
}

.dnav button {
    width: 19px;
}

.dnav .back {
    width: 29px;
}

.dnav .forward {
    width: 26px;
}

.path, .search {
    display: flex;
    align-items: center;
    height: 32px;
    border: 1px solid #353535;
}

.path {
    flex: 1;
    gap: 7px;
    margin-left: -1px;
    padding: 0 8px 0 2px;
}

.path a {
    margin-right: 2px;
}

.tools {
    display: flex;
    align-items: center;
    gap: 22px;
    margin-left: auto;
    color: #999;
}

.search {
    width: 203px;
    gap: 13px;
    margin-left: 5px;
    padding-left: 13px;
}

.search input {
    flex: 1;
    min-width: 0;
}

.search input::placeholder {
    color: #858585;
}

.dtools {
    display: flex;
    align-items: center;
    height: 32px;
    flex: none;
    padding: 0 15px 0 18px;
    background-color: #202020;
}

.organize {
    display: flex;
    align-items: center;
    gap: 3px;
    margin-right: 30px;
}

.viewas {
    margin-left: auto;
}

.viewdrop {
    margin: 0 20px 0 8px;
}

.preview {
    margin-right: 21px;
}

.dhelp {
    width: 15px;
    height: 15px;
    border-radius: 50%;
    background-color: #0a6fd0;
    color: #fff;
    line-height: 15px;
}

.dbody {
    flex: 1;
    min-height: 0;
    display: grid;
    grid-template-columns: 152px 1fr;
}

.places {
    display: flex;
    flex-direction: column;
    gap: 9px;
    padding-top: 17px;
}

.places li {
    display: flex;
    align-items: center;
    gap: 2px;
    height: 23px;
    padding-left: 24px;
    white-space: nowrap;
}

.here {
    background-color: #333;
}

.filepane {
    display: flex;
    flex-direction: column;
    justify-content: space-between;
    min-width: 0;
    border-left: 1px solid #2c2c2c;
    background-color: #202020;
}

.files {
    width: 612px;
    table-layout: fixed;
    border-collapse: collapse;
}

.f0 {
    width: 15px;
}

.f1 {
    width: 257px;
}

.f2 {
    width: 144px;
}

.f3 {
    width: 120px;
}

.f4 {
    width: 76px;
}

.files th {
    position: relative;
    height: 28px;
    padding: 0 0 0 6px;
    border-right: 1px solid #454545;
    font-weight: normal;
    text-align: left;
}

.files th:first-child, .files th:last-child {
    border-right: 0;
}

.files .sorted {
    padding-left: 3px;
}

.sorted svg {
    position: absolute;
    top: 1px;
    left: 122px;
}

.files tbody::before {
    content: "";
    display: block;
    height: 6px;
}

.files td {
    height: 21px;
    padding: 0 0 0 6px;
    font-size: 12px;
    white-space: nowrap;
    color: #cfcfcf;
}

.files .name {
    display: flex;
    align-items: center;
    gap: 5px;
    padding-left: 5px;
    font-size: 11px;
    color: #e4e4e4;
}

.files td:last-child {
    padding-right: 4px;
    text-align: right;
}

.selected td {
    background-color: #777;
}

.selected .pad {
    background: none;
}

.dscroll {
    display: flex;
    align-items: center;
    height: 17px;
    padding: 0 4px 0 5px;
    gap: 5px;
    background-color: #191919;
}

.dscroll i {
    flex: 1;
    height: 16px;
    margin-right: 10px;
    background-color: #4d4d4d;
}

.dfoot {
    position: relative;
    display: grid;
    grid-template-columns: 1fr 367px 187px;
    gap: 5px 13px;
    height: 92px;
    flex: none;
    padding: 29px 16px 11px 0;
    background-color: #383838;
}

.dfoot label {
    margin-right: -9px;
    line-height: 22px;
    text-align: right;
}

.combo {
    position: relative;
    height: 21px;
    border: 1px solid #666;
    background-color: #333;
}

.combo input, .combo select {
    width: 100%;
    height: 19px;
    padding-left: 1px;
}

.actions {
    grid-column: 3;
    display: grid;
    grid-template-columns: 1fr 1fr;
    gap: 13px;
}

.split, .cancel {
    display: flex;
    justify-content: center;
    align-items: center;
    height: 26px;
    border: 1px solid #aaa;
    background-color: #333;
}

.split {
    border-color: #eee;
}

.split button {
    flex: 1;
    height: 24px;
}

.split .splitdrop {
    flex: none;
    display: flex;
    align-items: center;
    justify-content: center;
    width: 16px;
    border-left: 1px solid #999;
}

.dgrip {
    position: absolute;
    right: 1px;
    bottom: 1px;
}

/* status bar */
.status {
    display: flex;
    align-items: center;
    height: 22px;
    flex: none;
    background-color: #cccccc;
}

.msg {
    width: 1026px;
    padding-top: 3px;
    white-space: nowrap;
}

.worksets {
    margin-right: 4px;
}

.spick {
    position: relative;
    width: 203px;
    height: 18px;
    background-color: #fff;
    color: #777;
}

.spick select {
    width: 100%;
    height: 18px;
    padding-left: 1px;
}

.spick svg {
    color: #bbb;
}

.req {
    margin: 0 6px 0 4px;
}

.count {
    width: 14px;
    padding-top: 6px;
}

.opt {
    margin-right: 5px;
}

.toggles {
    display: flex;
    align-items: center;
    gap: 5px;
    margin-left: auto;
    padding-right: 17px;
}

.toggles span {
    margin-left: -4px;
}

.taskbar {
    height: 3px;
    flex: none;
    background-color: #3b3f3f;
}

.taskbar i {
    display: block;
    width: 48px;
    height: 3px;
    margin-left: 537px;
    background-color: #6a6a6a;
}
```
